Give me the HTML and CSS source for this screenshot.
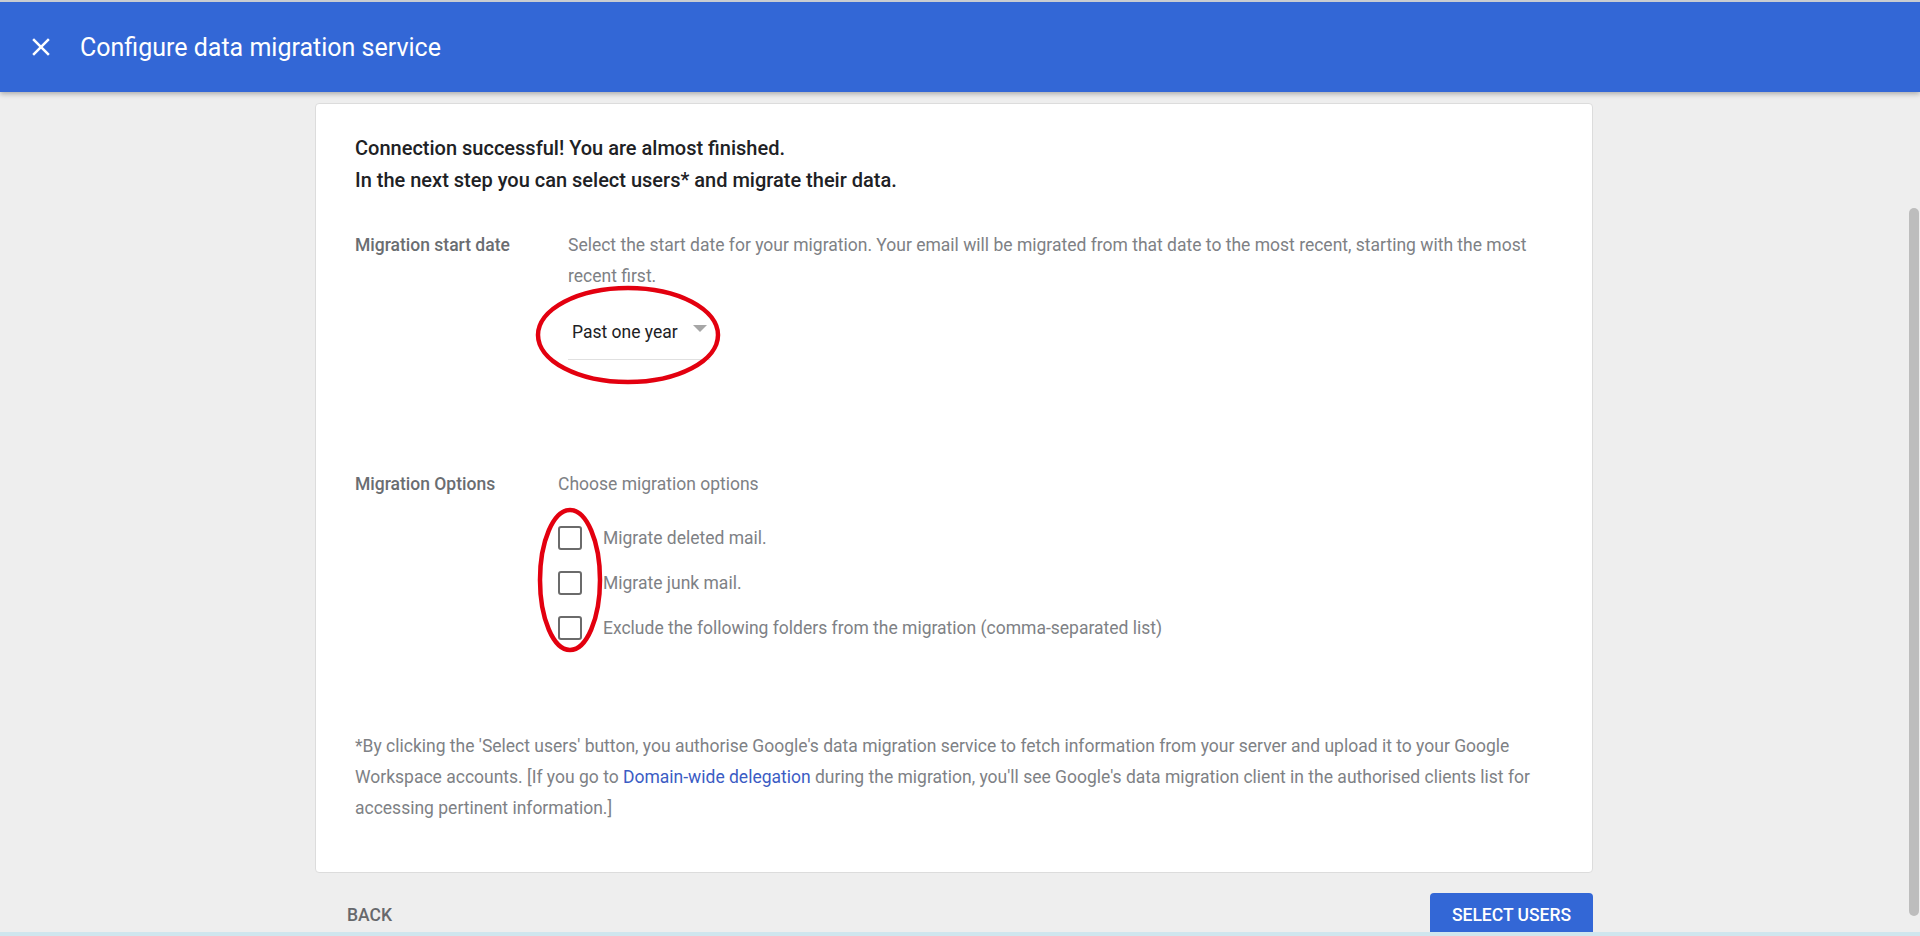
FILE: index.html
```html
<!DOCTYPE html>
<html lang="en">
<head>
<meta charset="utf-8">
<title>Configure data migration service</title>
<link rel="stylesheet" href="styles.css">
</head>
<body>
<div class="app">
  <header class="topbar">
    <svg class="close-icon" viewBox="0 0 24 24" width="30" height="30" aria-hidden="true">
      <path fill="#ffffff" d="M19 6.41L17.59 5 12 10.59 6.41 5 5 6.41 10.59 12 5 17.59 6.41 19 12 13.41 17.59 19 19 17.59 13.41 12z"/>
    </svg>
    <h1 class="title">Configure data migration service</h1>
  </header>
  <div class="viewport">
    <main class="content">
      <section class="card">
        <p class="intro">Connection successful! You are almost finished.<br>In the next step you can select users* and migrate their data.</p>

        <div class="row row-date">
          <div class="label">Migration start date</div>
          <div class="field field-date">
            <p class="desc">Select the start date for your migration. Your email will be migrated from that date to the most recent, starting with the most recent first.</p>
            <div class="select">
              <span class="select-value">Past one year</span>
              <span class="select-arrow"></span>
              <svg class="mark mark-select" width="190" height="104" viewBox="0 0 190 104" aria-hidden="true">
                <ellipse cx="95" cy="52" rx="90" ry="47" fill="none" stroke="#e3000f" stroke-width="4.5"/>
              </svg>
            </div>
          </div>
        </div>

        <div class="row row-options">
          <div class="label">Migration Options</div>
          <div class="field">
            <p class="choose">Choose migration options</p>
            <div class="checks">
              <label class="check"><span class="box"></span><span class="check-text">Migrate deleted mail.</span></label>
              <label class="check"><span class="box"></span><span class="check-text">Migrate junk mail.</span></label>
              <label class="check"><span class="box"></span><span class="check-text">Exclude the following folders from the migration (comma-separated list)</span></label>
              <svg class="mark mark-checks" width="70" height="150" viewBox="0 0 70 150" aria-hidden="true">
                <ellipse cx="35" cy="75" rx="30" ry="70" fill="none" stroke="#e3000f" stroke-width="4.5"/>
              </svg>
            </div>
          </div>
        </div>

        <p class="footnote">*By clicking the 'Select users' button, you authorise Google's data migration service to fetch information from your server and upload it to your Google Workspace accounts. [If you go to <a class="link" href="#">Domain-wide delegation</a> during the migration, you'll see Google's data migration client in the authorised clients list for accessing pertinent information.]</p>
      </section>

      <div class="actions">
        <button class="btn btn-text" type="button">Back</button>
        <button class="btn btn-primary" type="button">Select users</button>
      </div>
    </main>
    <div class="scrolltrack"><div class="scrollthumb"></div></div>
  </div>
  <div class="bottomstrip"></div>
</div>
</body>
</html>
```

FILE: styles.css
```css
* { box-sizing: border-box; }

html, body {
  margin: 0;
  padding: 0;
  height: 100%;
}

body {
  font-family: Roboto, "Liberation Sans", Arial, sans-serif;
  background: #eeeeee;
  color: #202124;
  overflow: hidden;
}

.app {
  display: flex;
  flex-direction: column;
  height: 936px;
}

.topbar {
  position: relative;
  z-index: 2;
  flex: 0 0 92px;
  display: flex;
  align-items: center;
  gap: 24px;
  padding-left: 26px;
  background: #3367d6;
  border-top: 2px solid #c9ccd1;
  box-shadow: 0 2px 5px rgba(0, 0, 0, 0.28);
}

.close-icon {
  display: block;
  flex: 0 0 30px;
}

.title {
  margin: 0;
  font-size: 25px;
  font-weight: 400;
  color: #ffffff;
  letter-spacing: 0;
}

.viewport {
  flex: 1 1 auto;
  display: flex;
  min-height: 0;
  overflow: hidden;
}

.content {
  flex: 1 1 auto;
  display: flex;
  flex-direction: column;
  align-items: center;
  padding-top: 11px;
}

.card {
  width: 1278px;
  flex: 0 0 auto;
  background: #ffffff;
  border: 1px solid #dcdcdc;
  border-radius: 4px;
  padding: 28px 40px 48px 39px;
}

.intro {
  margin: 0;
  font-size: 20px;
  font-weight: 500;
  line-height: 32px;
  color: #202124;
}

.row {
  display: grid;
  grid-template-columns: 203px 1fr;
}

.row-date { margin-top: 34px; }
.row-options { margin-top: 108.5px; }

.label {
  font-size: 17.5px;
  font-weight: 500;
  line-height: 31px;
  color: #6a6d71;
}

.field-date { padding-left: 10px; }

.desc,
.choose {
  margin: 0;
  font-size: 17.5px;
  line-height: 31px;
  color: #7e8185;
}

.select {
  position: relative;
  width: 142px;
  margin-top: 20px;
  padding: 8px 0 15px 4px;
  border-bottom: 1px solid #e0e0e0;
  display: flex;
  align-items: center;
}

.select-value {
  font-size: 17.5px;
  line-height: 24px;
  color: #202124;
}

.select-arrow {
  width: 0;
  height: 0;
  margin-left: auto;
  margin-right: 3px;
  margin-top: -7px;
  border-left: 7px solid transparent;
  border-right: 7px solid transparent;
  border-top: 7px solid #a6a6a6;
}

.mark {
  position: absolute;
  pointer-events: none;
}

.mark-select {
  left: -35px;
  top: -29px;
}

.checks {
  position: relative;
  margin-top: 15.5px;
  display: flex;
  flex-direction: column;
}

.check {
  height: 45px;
  display: flex;
  align-items: center;
  gap: 21px;
}

.box {
  flex: 0 0 24px;
  width: 24px;
  height: 24px;
  border: 2.5px solid #6b6b6b;
  border-radius: 3px;
  background: #ffffff;
}

.check-text {
  font-size: 17.5px;
  color: #7e8185;
}

.mark-checks {
  left: -23px;
  top: -10px;
}

.footnote {
  margin: 80.5px 0 0;
  font-size: 17.5px;
  line-height: 31px;
  color: #7e8185;
}

.link {
  color: #3b5cc4;
  text-decoration: none;
}

.actions {
  width: 1278px;
  margin-top: 20px;
  display: flex;
  justify-content: space-between;
  align-items: center;
}

.btn {
  height: 44px;
  border: 0;
  border-radius: 4px;
  font-family: inherit;
  font-size: 17.5px;
  font-weight: 500;
  text-transform: uppercase;
  cursor: pointer;
}

.btn-text {
  background: transparent;
  color: #66686c;
  padding: 0 32px;
}

.btn-primary {
  background: #3367d6;
  color: #ffffff;
  width: 163px;
  padding: 0;
}

.scrolltrack {
  flex: 0 0 12px;
  padding: 116px 1px 0 1px;
}

.scrollthumb {
  height: 708px;
  border-radius: 6px;
  background: #bdbdbd;
}

.bottomstrip {
  flex: 0 0 4px;
  background: #cfe6ee;
  position: relative;
  z-index: 2;
}
```
